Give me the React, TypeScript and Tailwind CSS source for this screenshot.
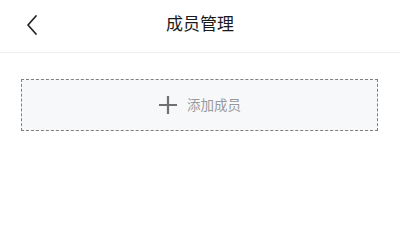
export default function App() {
  return (
    <div
      className="h-[245px] w-[400px] bg-white"
      style={{ fontFamily: '"Noto Sans CJK SC", "Noto Sans", sans-serif' }}
    >
      <header className="relative flex h-[53px] items-center justify-center border-b border-[#eeeeee]">
        <button type="button" aria-label="返回" className="absolute left-[24px] top-[12px] p-[3px]">
          <svg width="10" height="20" viewBox="0 0 10 20" fill="none">
            <path d="M9 1L1 10l8 9" stroke="#222" strokeWidth="1.7" strokeLinecap="round" strokeLinejoin="round" />
          </svg>
        </button>
        <h1 className="-mt-[7px] text-[17px] font-normal leading-none text-[#1a1a1a]">成员管理</h1>
      </header>

      <div className="px-[21px] pt-[26px]">
        <button
          type="button"
          className="flex h-[52px] w-[357px] items-center justify-center gap-[9px] border-[1.5px] border-dashed border-[#7f7f7f] bg-[#f7f8fa]"
        >
          <svg width="20" height="20" viewBox="0 0 20 20">
            <path d="M10 1v18M1 10h18" stroke="#707070" strokeWidth="2.2" />
          </svg>
          <span className="text-[13.5px] leading-none text-[#999999]">添加成员</span>
        </button>
      </div>
    </div>
  );
}
